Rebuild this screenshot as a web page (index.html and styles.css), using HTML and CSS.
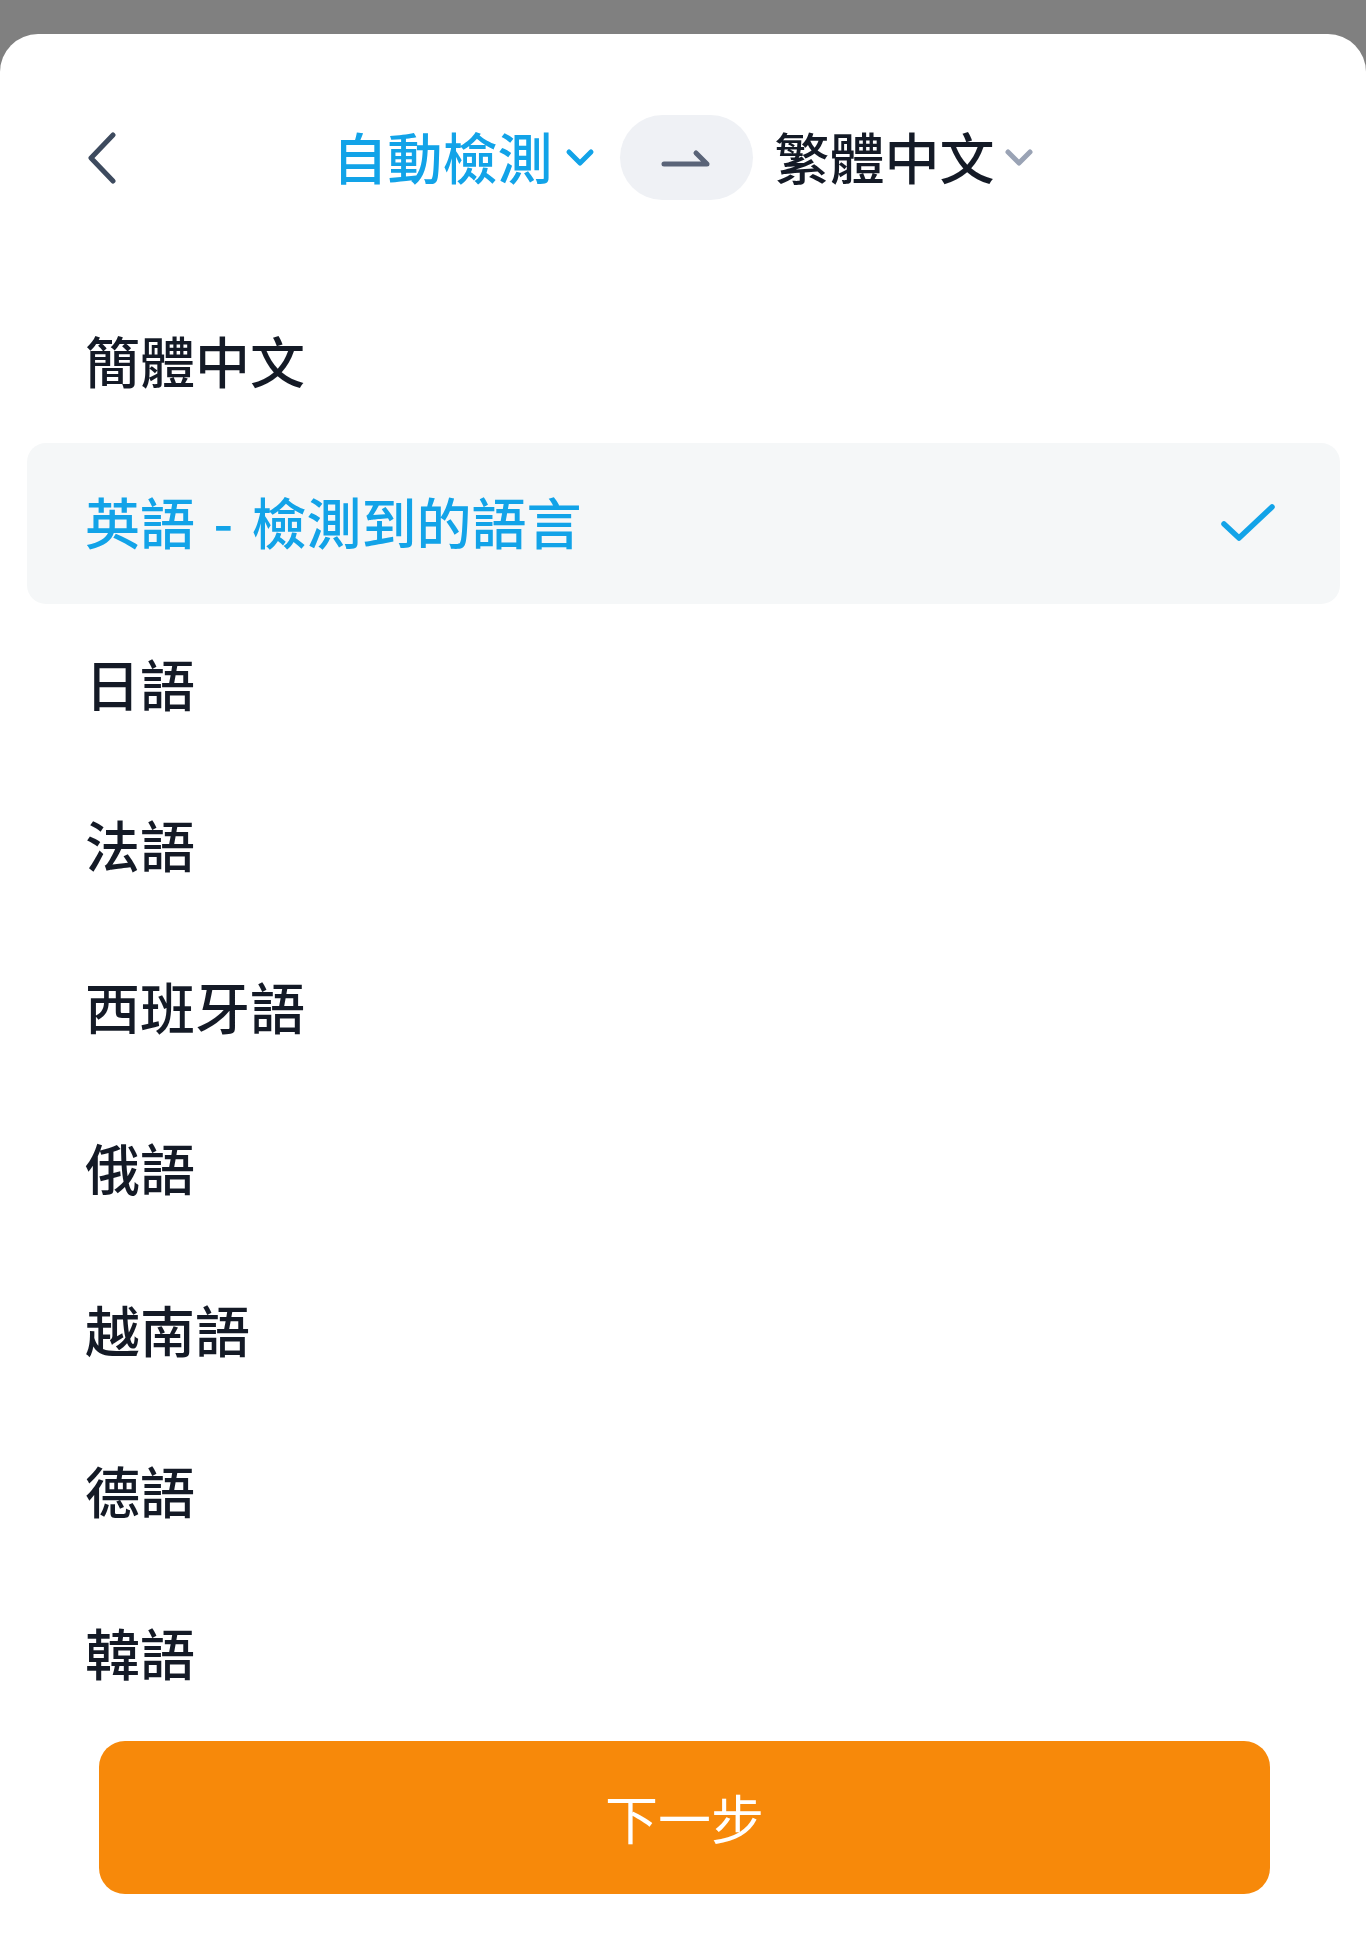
FILE: index.html
```html
<!DOCTYPE html>
<html lang="zh-Hant">

<head>
    <meta charset="UTF-8">
    <meta name="viewport" content="width=device-width, initial-scale=1.0">
    <title>選擇語言</title>
    <link rel="stylesheet" href="styles.css">
</head>

<body>
    <div class="sheet">
        <div class="header">
            <div class="back">
                <svg width="30" height="52" viewBox="0 0 30 52" fill="none" stroke="#3d4a5e" stroke-width="5" stroke-linecap="round" stroke-linejoin="round">
                    <path d="M26 3 L4 26 L26 49" />
                </svg>
            </div>
            <div class="langs">
                <div class="lang lang-from">
                    自動檢測
                    <svg width="30" height="20" viewBox="0 0 30 20" fill="none" stroke="currentColor" stroke-width="5" stroke-linecap="round" stroke-linejoin="round">
                        <path d="M4 4 L15 15 L26 4" />
                    </svg>
                </div>
                <div class="swap">
                    <svg width="50" height="20" viewBox="0 0 50 20" fill="none" stroke="#5a6478" stroke-width="5" stroke-linecap="round" stroke-linejoin="round">
                        <path d="M3 16 H46 L35 5" />
                    </svg>
                </div>
                <div class="lang lang-to">
                    繁體中文
                    <svg width="30" height="20" viewBox="0 0 30 20" fill="none" stroke="currentColor" stroke-width="5" stroke-linecap="round" stroke-linejoin="round">
                        <path d="M4 4 L15 15 L26 4" />
                    </svg>
                </div>
            </div>
            <div></div>
        </div>

        <ul class="list">
            <li class="row">簡體中文</li>
            <li class="row selected">
                <span class="detected">英語 - 檢測到的語言</span>
                <svg width="56" height="40" viewBox="0 0 56 40" fill="none" stroke="currentColor" stroke-width="5.5" stroke-linecap="round" stroke-linejoin="round">
                    <path d="M4 21 L19 35 L52 4" />
                </svg>
            </li>
            <li class="row">日語</li>
            <li class="row">法語</li>
            <li class="row">西班牙語</li>
            <li class="row">俄語</li>
            <li class="row">越南語</li>
            <li class="row">德語</li>
            <li class="row">韓語</li>
        </ul>

        <div class="footer">
            <div class="button">下一步</div>
        </div>
    </div>
</body>

</html>
```

FILE: styles.css
```css
:root {
    --text-color: #141a26;
    --blue: #12a3e8;
    --muted: #9aa3b5;
    --orange: #f7890a;
}

* {
    margin: 0;
    padding: 0;
    box-sizing: border-box;
    font-family: "Noto Sans CJK TC", "Noto Sans", sans-serif;
}

body {
    background: #808080;
    color: var(--text-color);
    min-height: 1957px;
    overflow: hidden;
}

.sheet {
    margin-top: 34px;
    background: #ffffff;
    border-radius: 38px 38px 0 0;
    min-height: 1923px;
    padding-top: 81px;
}

.header {
    display: grid;
    grid-template-columns: 1fr auto 1fr;
    align-items: center;
    height: 85px;
}

.back {
    padding-left: 87px;
    display: flex;
    align-items: center;
}

.langs {
    display: flex;
    align-items: center;
}

.lang {
    display: flex;
    align-items: center;
    font-size: 55px;
    font-weight: 500;
    line-height: 1;
    gap: 12px;
    padding-bottom: 4px;
}

.lang svg {
    margin-top: 4px;
}

.lang-from {
    color: var(--blue);
}

.lang-to {
    color: var(--text-color);
    gap: 9px;
}

.lang-to svg {
    color: var(--muted);
}

.swap {
    width: 133px;
    height: 85px;
    border-radius: 43px;
    background: #eff1f5;
    display: flex;
    align-items: center;
    justify-content: center;
    margin: 0 22px 0 25px;
}

.list {
    list-style: none;
    margin-top: 81px;
    padding: 0 26px 0 27px;
}

.row {
    height: 161.5px;
    display: flex;
    align-items: center;
    justify-content: space-between;
    padding: 0 64px 5px 58px;
    font-size: 55px;
    font-weight: 500;
    line-height: 1;
}

.row svg {
    margin-top: 5px;
}

.row.selected {
    background: #f5f7f8;
    border-radius: 19px;
    color: var(--blue);
}

.detected {
    word-spacing: 6px;
}

.footer {
    padding: 6px 96px 0 99px;
}

.button {
    height: 153px;
    border-radius: 26px;
    background: var(--orange);
    color: #ffffff;
    font-size: 53px;
    display: flex;
    align-items: center;
    justify-content: center;
    line-height: 1;
}
```
